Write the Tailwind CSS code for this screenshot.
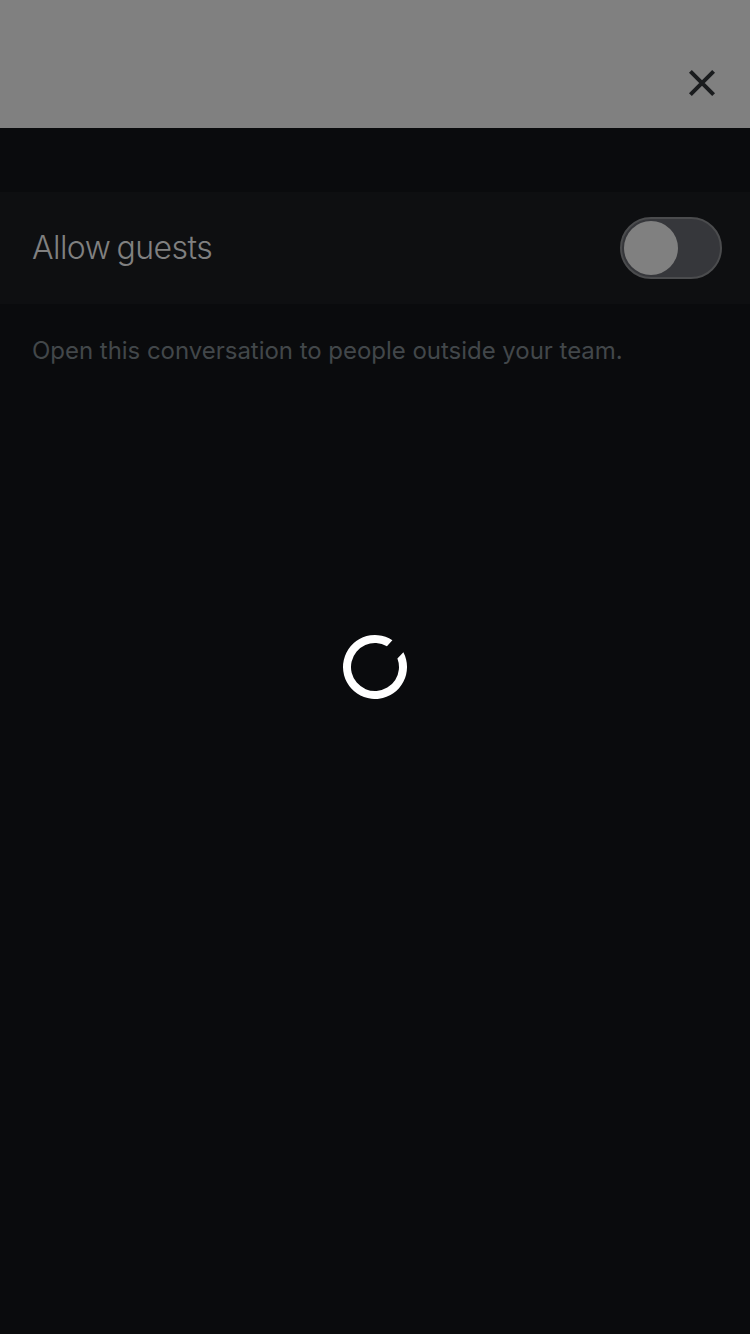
<!DOCTYPE html>
<html lang="en">
<head>
<meta charset="utf-8">
<title>Guests</title>
<script src="https://cdn.jsdelivr.net/npm/@tailwindcss/browser@4"></script>
</head>
<body class="bg-[#0a0b0d]">
<div class="relative flex h-[1334px] w-[750px] flex-col overflow-hidden bg-[#0a0b0d] font-['Inter','Liberation_Sans',sans-serif]">
  <header class="flex h-32 items-end justify-end bg-[#808080] pr-8 pb-[29px]">
    <button aria-label="Close">
      <svg class="block" width="32" height="32" viewBox="0 0 32 32" fill="none" stroke="#1a1c1e" stroke-width="4"><path d="M4.4 4.4 27.6 27.6M27.6 4.4 4.4 27.6"/></svg>
    </button>
  </header>
  <main class="flex-1 pt-16">
    <div class="flex h-28 items-center justify-between bg-[#0e0f11] pr-7 pl-8">
      <span class="text-[32px] leading-10 font-light tracking-[-0.56px] [word-spacing:-2px] whitespace-nowrap text-[#808080]">Allow guests</span>
      <div role="switch" aria-checked="false" class="flex h-[62px] w-[102px] items-center rounded-full border-2 border-[#4b4c4e] bg-[#36373b] pl-0.5">
        <div class="size-[54px] rounded-full bg-[#808080]"></div>
      </div>
    </div>
    <p class="pt-8 pl-8 text-[24px] leading-[30px] tracking-[-0.03px] whitespace-nowrap text-[#42474a]">Open this conversation to people outside your team.</p>
  </main>
  <div class="absolute inset-0 flex items-center justify-center">
    <svg width="64" height="64" viewBox="-32 -32 64 64" fill="#fff"><path d="M17.4 -26.85A32 32 0 1 0 28.4 -14.75L22.4 -8.6A24 24 0 1 1 11.9 -20.85Z"/></svg>
  </div>
</div>
</body>
</html>
